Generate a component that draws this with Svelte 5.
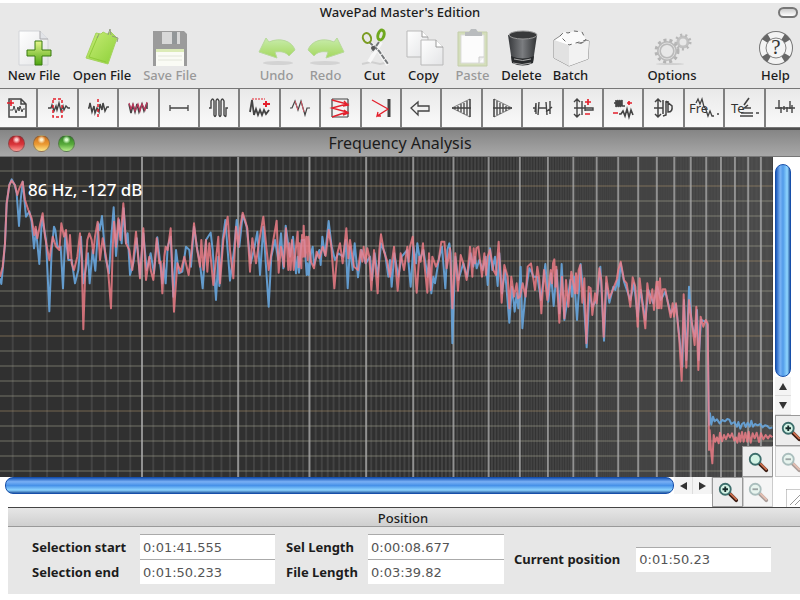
<script>
  const FILE_TOOLS = [
    { id: 'new', label: 'New File' },
    { id: 'open', label: 'Open File' },
    { id: 'save', label: 'Save File', off: true },
  ]
  const EDIT_TOOLS = [
    { id: 'undo', label: 'Undo', off: true },
    { id: 'redo', label: 'Redo', off: true },
    { id: 'cut', label: 'Cut' },
    { id: 'copy', label: 'Copy' },
    { id: 'paste', label: 'Paste', off: true },
    { id: 'delete', label: 'Delete' },
    { id: 'batch', label: 'Batch' },
  ]
  const OPTION_TOOLS = [{ id: 'options', label: 'Options' }]
  const HELP_TOOLS = [{ id: 'help', label: 'Help' }]

  const EFFECTS = [
    'Insert file', 'Trim', 'Split', 'Mix', 'Silence', 'Tone', 'Amplify', 'Envelope',
    'Compressor', 'Limiter', 'Reverse', 'Fade in', 'Fade out', 'Gap', 'Gain',
    'Noise', 'Pitch', 'Frequency', 'Text', 'Normalize',
  ]

  let selStart = $state('0:01:41.555')
  let selEnd   = $state('0:01:50.233')
  let selLen   = $state('0:00:08.677')
  let fileLen  = $state('0:03:39.82')
  let position = $state('0:01:50.23')

  // Plot units are thirds of a pixel at the default window width
  const W = 2319
  const H = 960

  const freqX = n => 3 * (142 + 278 * Math.log((n + 1.42) / 2.42))
  const major = []
  const minor = []
  for (let i = 1; i < 240; i++) {
    const x = freqX((i - 10) / 10)
    if (x > W) break
    if (i % 10 === 0) major.push(x)
    else minor.push(x)
  }
  const levels = Array.from({ length: 21 }, (_, i) => 42 + i * 45)

  // Each block is [x offset, y offset, points]
  const LEFT = [
    [0, -21, '0,380 8,350 15,280 20,160 28,105 35,92 45,105 52,135 58,115 68,95 75,150 85,180 95,205 103,255 107,230 112,265 120,225 128,190 135,260 148,330 158,260 168,290 178,300 184,220 192,260 198,240 205,325 210,255 215,340 222,360 232,320 240,250 245,320 250,538 256,360 262,270 268,250 275,270 280,310 285,260 293,215 300,330 308,265 318,320 325,370 333,475 338,300 342,215 348,290 355,205 361,270 370,160 378,280 388,300 397,360 408,245 420,385 430,235 438,390 448,320 452,360 460,390 470,265 478,340 482,335 487,430 493,320 497,290 503,300 512,235 522,485 532,340 542,365 553,320 566,375 575,300 582,220 590,290 600,350 604,270 610,360 618,270 622,365 628,280 640,405 655,260 660,400 670,270 683,200 690,300 700,385 708,230 715,290 719,240 728,188 735,210 742,235 750,365 757,265 768,340 778,270 790,200 800,300'],
    [600, 69, '206,270 212,235 220,180 230,122 236,278 243,200 252,260 258,145 265,270 268,190 272,270 276,180 281,270 285,230 293,155 296,262 299,190 304,265 306,165 309,230 311,137 315,230 319,170 323,240 325,170 333,245 342,265 350,215 358,235 368,200 377,228 386,150 394,200 403,325 412,220 420,190 428,250 439,145 445,235 450,180 462,260 474,270 482,210 487,245 491,200 497,250 502,205 508,230 514,330 522,210 533,340 538,210 543,163 552,215 562,245 570,290 582,200 593,332 602,220 612,270 622,200 626,245 630,200 638,170 650,338 658,230 662,245 669,190 674,260 682,338 687,220 692,330 697,230 708,260 716,240 724,185 733,185 740,265 750,205 757,385 766,220 774,332 782,225 790,250 800,300 808,225'],
    [1320, 189, '90,80 97,170 101,85 105,130 109,85 115,80 126,170 133,100 138,165 143,110 150,90 160,150 168,165 176,65 185,248 193,135 203,170 208,265 214,170 222,230 230,190 234,235 240,230 248,190 257,230 263,140 273,130 285,210 292,140 298,180 304,280 312,150 322,240 332,150 336,190 339,130 343,118 346,200 349,140 352,200 358,308 366,170 373,295 378,180 385,260 394,155 405,220 408,160 412,220 416,150 421,135 427,248 433,175 439,370 446,200 452,205 457,285 465,220 470,250 478,145 484,180 491,350 499,170 508,235 518,210 530,180 535,150 542,125 552,180 560,190 571,260 578,172 586,200 593,320 599,175 607,250 616,325 622,190 630,250 637,208 642,270 646,220 650,185 652,265 655,185 657,265 660,175 664,265 668,208 676,208 684,250 692,292 698,250 702,290 708,250 718,360 725,482 731,223 739,443 747,240 757,320 764,375 769,260 775,450 782,290 790,320 797,300 803,310'],
    [1920, 579, '206,190 207,300 209,240 213,300 217,340 221,255 226,275 231,262 236,280 240,248 246,274 252,255 258,268 264,252 270,262 276,250 283,272 288,262 292,278 297,250 301,275 306,246 311,275 316,248 322,275 326,245 332,278 338,250 344,265 350,248 357,276 363,250 370,268 377,255 384,265 390,256 397,262'],
  ]
  const RIGHT = [
    [0, -21, '0,385 4,402 9,350 15,280 20,160 28,105 35,88 44,105 50,130 57,228 62,150 68,95 78,200 88,185 95,215 102,295 108,240 118,342 126,200 138,270 148,484 155,300 162,230 166,240 172,290 182,290 189,415 196,250 205,330 215,330 225,400 235,360 243,260 250,400 260,340 264,310 269,400 278,300 286,362 295,220 299,240 306,198 316,320 327,370 334,260 341,172 348,318 357,210 365,280 371,175 378,280 383,250 390,375 400,340 410,265 420,380 430,250 440,360 452,310 462,370 472,262 487,400 491,340 497,400 503,290 512,260 520,440 528,300 537,370 547,365 558,290 568,300 573,350 582,230 592,300 600,340 608,415 618,270 632,248 638,300 648,450 655,320 658,408 668,270 676,210 690,392 702,300 710,210 718,290 728,195 740,230 752,340 762,300 772,245 780,375 790,230 806,470'],
    [600, 69, '214,230 225,180 235,240 243,160 250,265 257,137 270,230 279,170 288,280 293,230 297,278 305,180 313,180 320,285 323,250 326,285 333,220 338,200 342,255 348,235 358,210 362,255 367,170 375,225 386,123 395,200 405,240 415,220 430,230 437,180 443,325 450,200 458,270 464,190 474,292 485,210 497,250 510,230 516,300 524,220 533,290 543,190 555,220 565,290 570,240 575,320 583,220 595,290 605,230 622,210 632,320 640,200 648,250 652,190 660,240 670,210 683,290 687,240 694,340 700,290 705,310 716,240 726,200 736,325 742,210 748,190 752,220 757,490 766,230 775,300 790,250 802,290'],
    [1320, 189, '92,100 100,140 105,110 110,145 118,120 128,150 137,110 143,195 150,85 157,150 165,110 173,198 178,100 186,220 195,150 208,308 216,200 224,275 230,220 235,265 242,140 247,325 257,215 268,145 274,155 280,170 292,170 303,240 310,180 316,132 325,245 333,160 341,258 350,150 358,280 365,132 373,300 384,230 391,180 396,230 402,170 411,300 422,132 430,220 440,382 448,220 457,260 470,240 481,140 492,362 499,190 508,248 520,200 526,210 532,180 536,200 542,130 552,185 571,240 582,190 593,290 602,210 616,300 625,210 640,250 652,200 662,240 676,215 692,280 708,255 720,370 727,440 732,240 739,420 747,200 755,310 765,350 771,270 776,420 783,300 797,305 803,315'],
    [1920, 579, '206,190 207,225 210,190 214,224 219,200 224,214 231,208 239,220 247,210 255,214 262,207 268,209 274,222 283,216 291,230 295,216 301,236 306,222 312,218 317,231 323,218 329,230 334,212 339,230 345,222 353,226 361,222 368,232 375,226 382,228 389,235 397,232'],
  ]
  const toPoints = blocks => blocks
    .flatMap(([dx, dy, pts]) => pts.split(' ').map(p => {
      const [x, y] = p.split(',').map(Number)
      return `${x + dx},${y + dy}`
    }))
    .join(' ')
  const leftTrace  = toPoints(LEFT)
  const rightTrace = toPoints(RIGHT)
</script>

{#snippet toolIcon(id)}
  <svg class="tool-icon" viewBox="0 0 38 38" aria-hidden="true">
    {#if id === 'new'}
      <path d="M4 3h21l8 8v26H4z" fill="url(#paper)" stroke="#d2d4d8" />
      <path d="M25 3v8h8" fill="#e2e4e8" stroke="#a9a9ac" />
      <path d="M20 13h7v9h9v6h-9v9h-7v-9h-8v-6h8z" fill="url(#plus)" stroke="#397a10" />
    {:else if id === 'open'}
      <path d="M13 5l5 1 2-2 4 2 4-2 6 6-9 26-22-6z" fill="url(#green)" stroke="#a5d35d" />
      <path d="M15 8L6 29l17 5" fill="none" stroke="#8fca3a" />
      <path d="M16 6l-2 4M25 7l2-6 1 6M29 8l6 2-1 4" fill="none" stroke="#909c7d" />
    {:else if id === 'save'}
      <path d="M2 3h31l3 3v32H2z" fill="#9b9b9b" />
      <path d="M5 21h28v17H5z" fill="#fafbf5" />
      <path d="M5 21h28v3H5z" fill="#dcebb8" />
      <path d="M11 4h18v12H11z" fill="#d8d8d8" />
      <path d="M21 4h5v12h-5z" fill="#939799" />
      <path d="M7 28h24M7 32h24" stroke="#e2e5da" />
    {:else if id === 'undo' || id === 'redo'}
      <g transform={id === 'redo' ? 'matrix(-1 0 0 1 38 0)' : undefined}>
        <ellipse cx="20" cy="35" rx="15" ry="2" fill="#d3d3d3" />
        <path d="M1 24l7-14 3 4c11-5 23-1 26 8l-6 6c-3-4-8-5-14-4l2 6z" fill="url(#leaf)" stroke="#b7d99a" />
      </g>
    {:else if id === 'cut'}
      <path d="M6 36l9-2 9 2 5-1" fill="none" stroke="#d0d0d0" stroke-width="2" />
      <path d="M25 14L13 34M13 14l10 9 9 14" fill="none" stroke="#f7f7f7" stroke-width="4" />
      <path d="M23 14l-7 10M13 14l10 9 9 13" fill="none" stroke="#75787a" stroke-width="2" stroke-dasharray="5 1" />
      <ellipse cx="11" cy="10" rx="4" ry="5" fill="none" stroke="#7a9b20" stroke-width="2" transform="rotate(-22 11 10)" />
      <ellipse cx="25" cy="7" rx="3" ry="5" fill="none" stroke="#6fa81f" stroke-width="3" transform="rotate(16 25 7)" />
      <circle cx="17" cy="20" r="2" fill="#555" />
    {:else if id === 'copy'}
      <path d="M2 3h15l6 6v20H2z" fill="url(#paper)" stroke="#b9b9b9" />
      <path d="M17 3v6h6" fill="#fff" stroke="#999" />
      <path d="M16 12h15l7 7v18H16z" fill="url(#paper)" stroke="#b9b9b9" />
      <path d="M31 12v7h7" fill="#fff" stroke="#999" />
    {:else if id === 'paste'}
      <path d="M4 4h29v34H4z" fill="#d4debb" stroke="#c4ceaa" />
      <path d="M7 7h23v28H7z" fill="#fcfcfc" stroke="#ddd" />
      <path d="M11 4h4l2-3h5l2 3h4v4H11z" fill="#b9bcbe" />
      <path d="M25 35v-6h5" fill="#eee" stroke="#ccc" />
    {:else if id === 'delete'}
      <path d="M5 7h29l-4 27q-11 6-21 0z" fill="url(#bin)" />
      <ellipse cx="20" cy="7" rx="14" ry="4" fill="#393a3b" stroke="#999" />
      <path d="M8 28q12 5 23 0l-1 7q-10 5-21 0z" fill="#292b2d" />
      <path d="M11 31q9 3 17 0M10 35q9 3 18 0" fill="none" stroke="#aaa" />
    {:else if id === 'batch'}
      <path d="M2 12l9-6 26 7-1 18-19 7L2 30z" fill="#fff" stroke="#8c8c8c" />
      <path d="M2 12l15 5v21L2 30z" fill="#e2e2e2" />
      <path d="M17 17l20-4-1 18-19 7z" fill="#f2f2f2" />
      <path d="M8 8l4-4 4 1 6-2 8 1 4 8-17 5z" fill="#fafafa" stroke="#666" stroke-dasharray="4 4" />
      <path d="M25 15l9-2-5 3z" fill="#777" />
    {:else if id === 'options'}
      <ellipse cx="17" cy="36" rx="14" ry="1" fill="#d0d0d0" />
      <circle cx="14" cy="23" r="8" fill="none" stroke="#bbb" stroke-width="4" />
      <circle cx="14" cy="23" r="11" fill="none" stroke="#b4b4b4" stroke-width="3" stroke-dasharray="3 3" />
      <circle cx="14" cy="23" r="8" fill="none" stroke="#ddd" />
      <circle cx="30" cy="14" r="5" fill="none" stroke="#c2c2c2" stroke-width="3" />
      <circle cx="30" cy="14" r="7" fill="none" stroke="#b8b8b8" stroke-width="3" stroke-dasharray="2 3" />
    {:else if id === 'help'}
      <circle cx="19" cy="20" r="13" fill="none" stroke="#777" stroke-width="8" />
      <circle cx="19" cy="20" r="13" fill="none" stroke="#f3f3f3" stroke-width="6" />
      <circle cx="19" cy="20" r="13" fill="none" stroke="#666" stroke-width="7" stroke-dasharray="6 14.4" stroke-dashoffset="-7" />
      <circle cx="19" cy="20" r="10" fill="#f4f4f4" stroke="#888" />
      <text x="19" y="26" text-anchor="middle" class="help-mark">?</text>
    {/if}
  </svg>
{/snippet}

{#snippet toolButton(tool)}
  <button class="tool" disabled={tool.off}>
    {@render toolIcon(tool.id)}
    <span>{tool.label}</span>
  </button>
{/snippet}

{#snippet effectIcon(i)}
  <svg class="effect-icon" viewBox="0 0 24 24" fill="none" stroke="#444" aria-hidden="true">
    {#if i === 0}
      <path d="M4 3h12l5 5v13H4zM16 3v5h5" stroke-width="1.5" />
      <path d="M5 14h3l1-4 2 7 2-6 1 4 1-5 2 6 1-3h2" />
      <path d="M2 7h7M6 4v6" stroke="#e4202c" stroke-width="1.6" />
    {:else if i === 1}
      <path d="M2 12h3l1-3 2 6 2-5 1 4 2-7 2 8 2-5 1 4 2-4 2 2h2" stroke-width="1.4" />
      <path d="M7 3h9v18H7z" stroke="#e4202c" stroke-dasharray="3 2" stroke-width="1.5" />
    {:else if i === 2}
      <path d="M2 12h1l1-5 2 9 2-6 1 7 2-5 2 4 1-8 2 6 1-7 2 8 2-4h2" stroke-width="1.5" />
      <path d="M12 3v18" stroke="#e4202c" stroke-dasharray="3 2" stroke-width="1.5" />
    {:else if i === 3}
      <path d="M3 8l2 9 2-8 2 7 2-8 2 8 3-8 2 7 3-8v6" stroke-width="1.6" />
      <path d="M3 7l2 6 2-5 2 7 3-7 2 7 2-7 3 6 2-8" stroke="#bd365b" stroke-width="1.2" />
    {:else if i === 4}
      <path d="M3 12h18M3 9v6M21 9v6" stroke-width="1.3" />
    {:else if i === 5}
      <path d="M2 12h2V5q2-4 3 0v14q1 3 2 0V5q1-4 3 0v14q1 3 2 0V5q1-4 3 0v14q2 3 2 0v-7h2" stroke-width="1.4" />
    {:else if i === 6}
      <path d="M2 16l2-12 2 15 2-6 2 6 2-5 2 5 2-5 2 4 3-4" stroke-width="1.8" />
      <path d="M4 3h13" stroke="#e4202c" stroke-dasharray="2 1" />
      <path d="M15 8h7M18 5v6" stroke="#e4202c" stroke-width="2" />
    {:else if i === 7}
      <path d="M2 12h2l3-7 3 9 3-9 4 14 2-7h3" stroke-width="1.2" />
      <path d="M7 5l3 9M13 5l3 11" stroke="#d65a68" />
    {:else if i === 8}
      <path d="M4 3h16M4 21h16M4 3v18M20 3v18" stroke-width="1.2" />
      <path d="M4 4l15 4-15 4 15 4-15 5M16 5l4 4-5 1M16 14l4 3-5 2" stroke="#e4202c" stroke-width="1.4" />
    {:else if i === 9}
      <path d="M20 3v18" stroke-width="3" />
      <path d="M3 4l16 9L8 20l1-4m-1 4h4" stroke="#e4202c" stroke-width="1.3" />
    {:else if i === 10}
      <path d="M2 12l7-6v4h11v5H9v4z" stroke-width="1.3" />
    {:else if i === 11 || i === 12}
      <g transform={i === 12 ? 'matrix(-1 0 0 1 24 0)' : undefined}>
        <path d="M2 12h19M5 11v2M8 10v5M11 8v8M14 7v11M17 5v14M20 3v18" stroke-width="1.3" />
        <path d="M2 12L20 3v18z" stroke-width=".7" />
      </g>
    {:else if i === 13}
      <path d="M3 12h2M5 16l1-9v11M9 6l-1 13M8 12h9M17 19l-1-13M20 5v13M16 16l6-5" stroke-width="1.4" />
    {:else if i === 14}
      <path d="M6 3v18M3 6l3-3 3 3M3 18l3 3 3-3M11 5v14M14 9v6M8 12h14v2h-8M3 12h6" stroke-width="1.4" />
      <path d="M14 6h6M17 3v6M14 18h5" stroke="#e4202c" stroke-width="1.7" />
    {:else if i === 15}
      <path d="M3 7h2V4v7l2-7v7l2-7v7l2-7v6h3M8 18h2l2-3 2 5 2-7 2 8 2-7 2 5" stroke-width="1.6" />
      <path d="M16 7h5M18 5v4M2 17h5" stroke="#e4202c" stroke-width="1.7" />
    {:else if i === 16}
      <path d="M6 3v18M3 6l3-3 3 3M3 18l3 3 3-3M2 12h9M11 4v14M14 5v14l-3 1M14 5l6 5q1 6-4 6V5" stroke-width="1.5" />
    {:else if i === 17}
      <text x="-3" y="17" class="icon-text">Fre</text>
      <path d="M4 7l2-4 2 5 2-5 2 8 3 3M14 14l2 6 2-5 2 5h2M25 18h2" stroke-width="1.3" />
    {:else if i === 18}
      <text x="-1" y="17" class="icon-text">Te</text>
      <path d="M12 9l5-7M11 13l5-4M9 17h12M8 20h13M13 12h6M24 17h3" stroke-width="1.6" />
    {:else}
      <path d="M2 12h20M6 4v9M8 11v6M11 10v4M14 11v5M17 5v8M19 9v8" stroke-width="1.4" />
    {/if}
  </svg>
{/snippet}

{#snippet lens(sign)}
  <svg class="lens" viewBox="0 0 24 24" aria-hidden="true">
    <path d="M14 14l7 7" stroke="#3b1d13" stroke-width="4" stroke-linecap="round" />
    <path d="M15 14l6 6" stroke="#cf7150" stroke-width="2" stroke-linecap="round" />
    <circle cx="9" cy="9" r="6" fill="#d3f3e5" stroke="#3d6e6c" stroke-width="2" />
    {#if sign}
      <path d={sign === '+' ? 'M6 9h6M9 6v6' : 'M6 9h6'} stroke="#162a2a" stroke-width="2" />
    {/if}
  </svg>
{/snippet}

<svg class="defs" width="0" height="0" aria-hidden="true">
  <defs>
    <linearGradient id="paper" x2="1" y2="1"><stop stop-color="#fff" /><stop offset="1" stop-color="#e3e4e6" /></linearGradient>
    <linearGradient id="plus" y2="1" x2="0"><stop stop-color="#e6f78c" /><stop offset="1" stop-color="#4da411" /></linearGradient>
    <linearGradient id="green" x2="1" y2="1"><stop stop-color="#c9ed78" /><stop offset="1" stop-color="#8cd038" /></linearGradient>
    <linearGradient id="leaf" y2="1" x2="0"><stop stop-color="#c8ecac" /><stop offset="1" stop-color="#a4d75d" /></linearGradient>
    <linearGradient id="bin"><stop stop-color="#35373a" /><stop offset=".5" stop-color="#7b7d80" /><stop offset="1" stop-color="#303234" /></linearGradient>
  </defs>
</svg>

<main class="app">
  <header class="top">
    <div class="app-title">
      <h1>WavePad Master's Edition</h1>
      <button class="pill" aria-label="Toggle toolbar"></button>
    </div>
    <div class="tools">
      <div class="group file">
        {#each FILE_TOOLS as tool}{@render toolButton(tool)}{/each}
      </div>
      <div class="group edit">
        {#each EDIT_TOOLS as tool}{@render toolButton(tool)}{/each}
      </div>
      <div class="group options">
        {#each OPTION_TOOLS as tool}{@render toolButton(tool)}{/each}
      </div>
      <div class="group help">
        {#each HELP_TOOLS as tool}{@render toolButton(tool)}{/each}
      </div>
    </div>
  </header>

  <div class="effects-clip">
    <div class="effects">
      {#each EFFECTS as name, i}
        <button class="effect" aria-label={name}>{@render effectIcon(i)}</button>
      {/each}
    </div>
  </div>

  <section class="analysis">
    <div class="win-title">
      <div class="lights">
        <button class="light red" aria-label="Close"></button>
        <button class="light amber" aria-label="Minimise"></button>
        <button class="light green" aria-label="Zoom"></button>
      </div>
      <h2>Frequency Analysis</h2>
    </div>

    <div class="plot-row">
      <div class="plot">
        <svg viewBox="0 0 {W} {H}" preserveAspectRatio="none" role="img" aria-label="Frequency spectrum">
          {#each minor as x}<line class="minor" x1={x} x2={x} y1="0" y2={H} />{/each}
          {#each levels as y, i}<line class={['level', i % 5 === 1 && 'warm']} x1="0" x2={W} y1={y} y2={y} />{/each}
          {#each major as x}<line class="major" x1={x} x2={x} y1="0" y2={H} />{/each}
          <polyline class="trace right" points={rightTrace} />
          <polyline class="trace left" points={leftTrace} />
        </svg>
        <span class="readout">86 Hz, -127 dB</span>
        <button class="zoom fit" aria-label="Zoom to fit">{@render lens('')}</button>
      </div>
      <div class="side">
        <div class="vbar"><div class="vthumb"></div></div>
        <button class="arrow up" aria-label="Scroll up"></button>
        <button class="arrow down" aria-label="Scroll down"></button>
        <button class="zoom" aria-label="Zoom in vertically">{@render lens('+')}</button>
        <button class="zoom" aria-label="Zoom out vertically" disabled>{@render lens('-')}</button>
      </div>
    </div>

    <div class="bottom">
      <div class="hscroll">
        <div class="hthumb"></div>
        <button class="arrow prev" aria-label="Scroll left"></button>
        <button class="arrow next" aria-label="Scroll right"></button>
      </div>
      <button class="zoom" aria-label="Zoom in horizontally">{@render lens('+')}</button>
      <button class="zoom" aria-label="Zoom out horizontally" disabled>{@render lens('-')}</button>
      <div class="corner">
        <svg class="grip" viewBox="0 0 14 18" aria-hidden="true">
          <path d="M0 18V0h14M4 16L14 6M9 16l5-5" fill="none" stroke="#999" />
        </svg>
      </div>
    </div>
  </section>

  <section class="position">
    <h3>Position</h3>
    <div class="fields">
      <label class="start" for="sel-start">Selection start</label>
      <input id="sel-start" bind:value={selStart} />
      <label class="mid" for="sel-len">Sel Length</label>
      <input id="sel-len" bind:value={selLen} />
      <label class="start" for="sel-end">Selection end</label>
      <input id="sel-end" bind:value={selEnd} />
      <label class="mid" for="file-len">File Length</label>
      <input id="file-len" bind:value={fileLen} />
      <div class="current">
        <label for="cur-pos">Current position</label>
        <input id="cur-pos" bind:value={position} />
      </div>
    </div>
  </section>
</main>

<style>
  :global(body) { margin: 0; background: #fff; }

  .app {
    font-family: 'Noto Sans', 'Open Sans', sans-serif;
    color: #1c1c1c;
    overflow: hidden;
  }
  .app * { box-sizing: border-box; }
  .defs { position: absolute; }

  button { font-family: inherit; padding: 0; border: none; background: none; color: inherit; }
  h1, h2, h3 { margin: 0; font-weight: 500; }

  .top { height: 88px; background: #e8e8e8; border-top: 3px solid #fff; }
  .app-title {
    display: grid;
    grid-template-columns: 28px 1fr 28px;
    align-items: center;
    height: 18px;
  }
  h1 { grid-column: 2; font-size: 13px; line-height: 18px; text-align: center; }
  .pill {
    width: 20px;
    height: 11px;
    margin-left: 6px;
    border: 2px solid #777;
    border-radius: 6px;
    background: linear-gradient(#ccc, #fff);
  }

  .tools { display: flex; padding-top: 7px; }
  .group { display: flex; }
  .edit { margin-left: 48px; }
  .options { margin-left: 42px; }
  .help { margin-left: auto; }
  .tool {
    display: flex;
    flex-direction: column;
    align-items: center;
    width: 49px;
    font-size: 13px;
    font-weight: 500;
    line-height: 18px;
    white-space: nowrap;
  }
  .file .tool { width: 68px; }
  .options .tool { width: 70px; }
  .tool:disabled { color: #999; }
  .tool-icon { width: 38px; height: 38px; overflow: visible; }
  .help-mark { font-family: 'Liberation Serif', serif; font-size: 21px; fill: #333; }

  .effects-clip { overflow: hidden; }
  .effects {
    display: grid;
    grid-template-columns: repeat(20, 1fr);
    margin: 0 -6px 0 -2px;
    height: 40px;
    border-top: 1px solid #777;
    border-bottom: 1px solid #777;
  }
  .effect {
    display: flex;
    align-items: center;
    justify-content: center;
    border-right: 2px solid #808080;
    background: linear-gradient(#e9e9e9, #fafafa);
  }
  .effect-icon { width: 24px; height: 24px; flex: none; overflow: visible; }
  .icon-text { font-size: 13px; fill: #333; stroke: none; }

  .win-title {
    display: grid;
    grid-template-columns: 80px 1fr 80px;
    align-items: center;
    height: 29px;
    border-top: 2px solid #4e4e4e;
    border-bottom: 1px solid #777;
    background: linear-gradient(#858585, #a8a8a8);
  }
  h2 { font-size: 16px; font-weight: 400; line-height: 24px; text-align: center; }
  .lights { display: flex; gap: 8px; padding-left: 8px; }
  .light { width: 17px; height: 17px; border-radius: 50%; border: 1px solid #5558; }
  .light.red { background: radial-gradient(circle at 50% 25%, #ffd0d0 0 1px, transparent 4px), linear-gradient(#b81c24, #d8353a 55%, #ff9d96); }
  .light.amber { background: radial-gradient(circle at 50% 25%, #fff0cc 0 1px, transparent 4px), linear-gradient(#cb6d1b, #eb9a33 55%, #ffe88a); }
  .light.green { background: radial-gradient(circle at 50% 25%, #dcffd0 0 1px, transparent 4px), linear-gradient(#2f8023, #58aa3b 55%, #b9f18c); }

  .plot-row { display: grid; grid-template-columns: 1fr 27px; }
  .plot { position: relative; height: 320px; background: #303030; }
  .plot > svg { display: block; width: 100%; height: 100%; }
  line { stroke-width: 1; vector-effect: non-scaling-stroke; }
  .minor { stroke: #999; stroke-opacity: .18; stroke-width: 2; }
  .level { stroke: #b5b59d; stroke-opacity: .5; }
  .level.warm { stroke: #b79c70; }
  .major { stroke: #aaa; stroke-opacity: .8; stroke-width: 2; }
  .trace {
    fill: none;
    stroke-width: 2;
    stroke-linejoin: round;
    vector-effect: non-scaling-stroke;
  }
  .trace.left { stroke: #f5808a; stroke-opacity: .8; }
  .trace.right { stroke: #68a6de; stroke-opacity: .9; }
  .readout {
    position: absolute;
    left: 28px;
    top: 22px;
    font-size: 17px;
    font-weight: 500;
    line-height: 22px;
    color: #fff;
  }

  .zoom {
    display: flex;
    align-items: center;
    justify-content: center;
    width: 31px;
    height: 31px;
    border: 1px solid #999;
    background: #ededed;
  }
  .zoom:disabled { background: #f5f5f5; border-color: #ccc; }
  .zoom:disabled .lens { opacity: .4; }
  .lens { width: 22px; height: 22px; flex: none; }
  .fit { position: absolute; right: 0; bottom: 0; }

  .side {
    display: flex;
    flex-direction: column;
    padding-left: 2px;
    background: #fff;
    overflow: hidden;
  }
  .vbar { flex: 1; padding-top: 7px; }
  .vthumb {
    width: 16px;
    height: 100%;
    border: 1px solid #174faa;
    border-radius: 8px;
    background: linear-gradient(90deg, #1c59ba, #79b3f5 30%, #519be9 50%, #90d6ff 80%, #285ca4);
  }
  .arrow {
    display: flex;
    align-items: center;
    justify-content: center;
    width: 16px;
    height: 19px;
    background: #f4f4f4;
    border-bottom: 1px solid #ddd;
  }
  .arrow::before { content: ''; border: 4px solid transparent; }
  .up::before { border-bottom: 7px solid #333; border-top: 0; }
  .down::before { border-top: 7px solid #333; border-bottom: 0; }
  .prev::before { border-right: 7px solid #333; border-left: 0; }
  .next::before { border-left: 7px solid #333; border-right: 0; }

  .bottom { display: grid; grid-template-columns: 1fr 31px 30px 27px; height: 30px; }
  .bottom .zoom { width: auto; height: 30px; }
  .hscroll { display: flex; height: 17px; padding-left: 5px; }
  .hthumb {
    flex: 1;
    border: 1px solid #174faa;
    border-radius: 8px;
    background: linear-gradient(#1c59ba, #79b0f5 25%, #4791e8 50%, #8dd4ff 80%, #285ca4);
  }
  .hscroll .arrow { width: 19px; height: 17px; border-bottom: 0; border-right: 1px solid #ddd; }
  .corner { display: flex; align-items: flex-end; justify-content: flex-end; }
  .grip { width: 14px; height: 18px; }

  .position {
    margin-left: 8px;
    height: 87px;
    border-top: 1px solid #444;
    background: #e7e7e7;
  }
  h3 {
    height: 19px;
    padding-right: 2px;
    border-bottom: 1px solid #999;
    background: linear-gradient(#e6e6e6, #cfcfcf);
    font-size: 13px;
    line-height: 20px;
    text-align: center;
  }
  .fields {
    display: grid;
    grid-template-columns: 132px 135px 93px 136px 1fr;
    grid-auto-rows: 25px;
    align-items: center;
    padding-top: 7px;
  }
  .fields label { font-size: 13px; font-weight: 700; line-height: 18px; }
  .start { padding-left: 24px; }
  .mid { padding-left: 11px; }
  input {
    width: 100%;
    height: 25px;
    padding: 0 3px;
    border: none;
    border-top: 1px solid #aaa;
    background: #fff;
    color: #555;
    font-family: 'DejaVu Sans', sans-serif;
    font-size: 13px;
  }
  .current {
    grid-column: 5;
    grid-row: 1 / 3;
    display: flex;
    align-items: center;
    gap: 16px;
    padding: 0 29px 0 10px;
  }
  .current label { flex: none; }
  .current input { flex: 1; min-width: 0; }
</style>
